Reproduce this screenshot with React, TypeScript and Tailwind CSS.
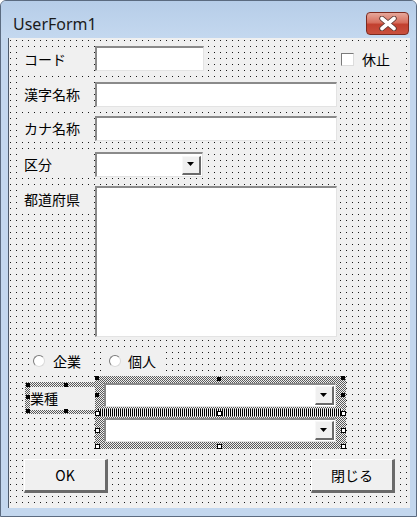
import React from "react";

// VBA UserForm designer window
const jp = "font-['Noto_Sans_CJK_JP','Noto_Sans',sans-serif] text-[14px] text-black";
const dotted =
  "bg-[#f0f0f0] bg-[image:linear-gradient(to_right,#f0f0f0_5px,transparent_5px),linear-gradient(to_bottom,#f0f0f0_5px,#1a1a1a_5px)] bg-[length:6px_6px] bg-[position:2px_3px]";
const hatch =
  "bg-[#f0f0f0] bg-[image:repeating-conic-gradient(#5a5a5a_0_25%,#f0f0f0_0_50%)] bg-[length:2px_2px]";
const sunken =
  "bg-white border-t-2 border-l-2 border-b border-r border-t-[#8a8a8a] border-l-[#8a8a8a] border-b-[#e3e3e3] border-r-[#e3e3e3]";
const label = "w-[70px] h-[25px] shrink-0 bg-[#f0f0f0] flex items-center pl-[4px]";
const button =
  "w-[84px] h-[34px] bg-[#f0f0f0] border-t border-l border-t-white border-l-white border-b-[3px] border-r-[3px] border-b-[#6a6a6a] border-r-[#6a6a6a] flex items-center justify-center";

function Arrow() {
  return (
    <svg width="8" height="5" viewBox="0 0 8 5">
      <path d="M0 0 H7 L3.5 4 Z" fill="#000" />
    </svg>
  );
}

function Combo({ className }: { className: string }) {
  return (
    <div className={`${sunken} flex justify-end items-center pr-[1px] shrink-0 ${className}`}>
      <div className="w-[19px] h-[19px] bg-[#f0f0f0] border-t border-l border-t-[#f8f8f8] border-l-[#f8f8f8] border-b-2 border-r-2 border-b-[#6a6a6a] border-r-[#6a6a6a] flex items-center justify-center">
        <Arrow />
      </div>
    </div>
  );
}

function Handle({ className, hollow }: { className: string; hollow?: boolean }) {
  return hollow ? (
    <div className={`absolute w-[5px] h-[5px] bg-white border border-black ${className}`} />
  ) : (
    <div className={`absolute w-[4px] h-[4px] bg-black ${className}`} />
  );
}

function Radio() {
  return (
    <div className="w-[12px] h-[12px] rounded-full bg-white border border-t-[#7a7a7a] border-l-[#7a7a7a] border-r-[#dadada] border-b-[#dadada]" />
  );
}

export default function App() {
  return (
    <div className="w-[417px] h-[517px] flex flex-col border border-[#5b6b80] rounded-t-[6px] bg-[#c3d7ee] overflow-hidden">
      {/* title bar */}
      <div className="h-[37px] shrink-0 flex items-center justify-between pl-[12px] pr-[7px] pt-[9px] bg-[image:linear-gradient(to_bottom,#b6cde8,#c4d8ef)]">
        <span className="font-['Noto_Sans',sans-serif] text-[16px] text-[#1b1b1b] leading-none">
          UserForm1
        </span>
        <div className="w-[43px] h-[23px] -mt-[1px] rounded-[4px] border border-[#7c2b20] bg-[image:linear-gradient(to_bottom,#e6a89b_0%,#d7705f_45%,#c2402f_55%,#c9503e_100%)] flex items-center justify-center">
          <svg width="20" height="15" viewBox="0 0 20 15">
            <path d="M4 2.5 L16 12.5 M16 2.5 L4 12.5" stroke="#5e3a34" strokeWidth="5.5" strokeLinecap="round" />
            <path d="M4 2.5 L16 12.5 M16 2.5 L4 12.5" stroke="#fff" strokeWidth="3.6" strokeLinecap="round" />
          </svg>
        </div>
      </div>

      {/* client area */}
      <div className="ml-[7px] mr-[6px] h-[470px] border-l border-[#4d5a6b]">
        <div className={`w-[401px] h-[470px] flex flex-col ${dotted} ${jp}`}>
          {/* コード + 休止 */}
          <div className="flex items-start mt-[8px] pl-[11px]">
            <div className={`${label} mt-[1px]`}>コード</div>
            <div className={`ml-[5px] w-[109px] h-[25px] ${sunken}`} />
            <div className="ml-[134px] w-[68px] h-[26px] bg-[#f0f0f0] flex items-center pl-[3px] gap-[8px]">
              <div className="w-[13px] h-[13px] bg-white border border-t-[#7a7a7a] border-l-[#7a7a7a] border-b-[#dcdcdc] border-r-[#dcdcdc]" />
              <span>休止</span>
            </div>
          </div>

          <div className="flex mt-[10px] pl-[11px]">
            <div className={label}>漢字名称</div>
            <div className={`ml-[5px] w-[242px] h-[25px] ${sunken}`} />
          </div>

          <div className="flex mt-[9px] pl-[11px]">
            <div className={label}>カナ名称</div>
            <div className={`ml-[5px] w-[242px] h-[25px] ${sunken}`} />
          </div>

          <div className="flex mt-[11px] pl-[11px]">
            <div className={label}>区分</div>
            <Combo className="ml-[5px] w-[108px] h-[25px]" />
          </div>

          <div className="flex items-start mt-[9px] pl-[11px]">
            <div className={`${label} mt-[1px]`}>都道府県</div>
            <div className={`ml-[5px] w-[242px] h-[151px] ${sunken}`} />
          </div>

          {/* option buttons */}
          <div className="flex mt-[12px] pl-[21px]">
            <div className="w-[60px] h-[24px] bg-[#f0f0f0] flex items-center pl-[3px] gap-[8px]">
              <Radio />
              <span>企業</span>
            </div>
            <div className="ml-[13px] w-[62px] h-[24px] bg-[#f0f0f0] flex items-center pl-[6px] gap-[7px]">
              <Radio />
              <span>個人</span>
            </div>
          </div>

          {/* selected controls */}
          <div className="flex items-start mt-[3px] pl-[16px]">
            <div className={`relative mt-[6px] w-[70px] h-[32px] pl-[5px] pt-[5px] ${hatch}`}>
              <div className="h-[23px] bg-[#f0f0f0] flex items-center">業種</div>
              <Handle className="left-[1px] top-[1px]" />
              <Handle className="left-[39px] top-[1px]" />
              <Handle className="left-[1px] top-[13px]" />
              <Handle className="left-[1px] top-[27px]" />
              <Handle className="left-[39px] top-[27px]" />
            </div>
            <div className={`relative w-[251px] h-[73px] pl-[9px] pt-[7px] flex flex-col ${hatch}`}>
              <Combo className="w-[232px] h-[24px]" />
              <div className="my-[2px] -ml-[6px] w-[244px] h-[7px] bg-[#f0f0f0] bg-[image:repeating-linear-gradient(90deg,#000_0_1px,#f0f0f0_1px_2px)]" />
              <Combo className="w-[232px] h-[24px]" />
              <Handle className="left-0 top-0" />
              <Handle className="left-[122px] top-[1px]" />
              <Handle className="left-[246px] top-0" />
              <Handle className="left-0 top-[17px]" />
              <Handle className="left-[246px] top-[17px]" />
              <Handle hollow className="left-0 top-[35px]" />
              <Handle hollow className="left-[122px] top-[35px]" />
              <Handle hollow className="left-[246px] top-[35px]" />
              <Handle hollow className="left-0 top-[52px]" />
              <Handle hollow className="left-[246px] top-[52px]" />
              <Handle hollow className="left-0 top-[68px]" />
              <Handle hollow className="left-[122px] top-[68px]" />
              <Handle hollow className="left-[246px] top-[68px]" />
            </div>
          </div>

          {/* buttons */}
          <div className="flex justify-between mt-[10px] pl-[15px] pr-[15px]">
            <div className={button}>OK</div>
            <div className={button}>閉じる</div>
          </div>
        </div>
      </div>
    </div>
  );
}
